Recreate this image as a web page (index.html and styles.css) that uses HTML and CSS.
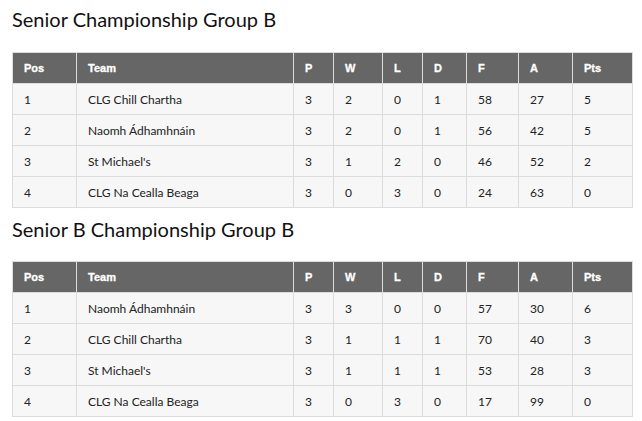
FILE: index.html
```html
<!DOCTYPE html>
<html>
<head>
<meta charset="utf-8">
<link rel="stylesheet" href="styles.css">
</head>
<body>
<section class="group">
  <h2 class="title">Senior Championship Group B</h2>
  <table class="standings">
    <thead>
      <tr><th class="c-pos">Pos</th><th class="c-team">Team</th><th class="c-p">P</th><th class="c-w">W</th><th class="c-l">L</th><th class="c-d">D</th><th class="c-f">F</th><th class="c-a">A</th><th class="c-pts">Pts</th></tr>
    </thead>
    <tbody>
      <tr><td>1</td><td>CLG Chill Chartha</td><td>3</td><td>2</td><td>0</td><td>1</td><td>58</td><td>27</td><td>5</td></tr>
      <tr><td>2</td><td>Naomh Ádhamhnáin</td><td>3</td><td>2</td><td>0</td><td>1</td><td>56</td><td>42</td><td>5</td></tr>
      <tr><td>3</td><td>St Michael's</td><td>3</td><td>1</td><td>2</td><td>0</td><td>46</td><td>52</td><td>2</td></tr>
      <tr><td>4</td><td>CLG Na Cealla Beaga</td><td>3</td><td>0</td><td>3</td><td>0</td><td>24</td><td>63</td><td>0</td></tr>
    </tbody>
  </table>
</section>
<section class="group">
  <h2 class="title">Senior B Championship Group B</h2>
  <table class="standings">
    <thead>
      <tr><th class="c-pos">Pos</th><th class="c-team">Team</th><th class="c-p">P</th><th class="c-w">W</th><th class="c-l">L</th><th class="c-d">D</th><th class="c-f">F</th><th class="c-a">A</th><th class="c-pts">Pts</th></tr>
    </thead>
    <tbody>
      <tr><td>1</td><td>Naomh Ádhamhnáin</td><td>3</td><td>3</td><td>0</td><td>0</td><td>57</td><td>30</td><td>6</td></tr>
      <tr><td>2</td><td>CLG Chill Chartha</td><td>3</td><td>1</td><td>1</td><td>1</td><td>70</td><td>40</td><td>3</td></tr>
      <tr><td>3</td><td>St Michael's</td><td>3</td><td>1</td><td>1</td><td>1</td><td>53</td><td>28</td><td>3</td></tr>
      <tr><td>4</td><td>CLG Na Cealla Beaga</td><td>3</td><td>0</td><td>3</td><td>0</td><td>17</td><td>99</td><td>0</td></tr>
    </tbody>
  </table>
</section>
</body>
</html>
```
FILE: styles.css
```css
html, body {
  margin: 0;
  padding: 0;
  background: #ffffff;
}
body {
  padding: 0 9px 0 12px;
  font-family: "Lato", "Liberation Sans", sans-serif;
  color: #222;
}
.title {
  margin: 0;
  padding-top: 6px;
  height: 52px;
  box-sizing: border-box;
  font-family: "Lato", sans-serif;
  font-weight: 400;
  font-size: 20px;
  line-height: 26px;
  color: #111;
}
.group + .group .title {
  padding-top: 8px;
  height: 53px;
}
.standings {
  width: 621px;
  border-collapse: collapse;
  table-layout: fixed;
  font-size: 12px;
}
.standings th,
.standings td {
  box-sizing: border-box;
  text-align: left;
  padding: 0 0 0 11px;
  border: 1px solid #dcdcdc;
}
.standings th {
  height: 31px;
  background: #666666;
  color: #ffffff;
  font-family: "Liberation Sans", Arial, sans-serif;
  font-weight: 700;
  font-size: 11px;
  -webkit-text-stroke: 0.3px #ffffff;
  border-color: #dcdcdc;
}
.standings td {
  height: 31px;
  background: #f7f7f7;
  color: #222;
}
.c-pos { width: 64px; }
.c-team { width: 217px; }
.c-p { width: 40px; }
.c-w { width: 49px; }
.c-l { width: 40px; }
.c-d { width: 44px; }
.c-f { width: 52px; }
.c-a { width: 54px; }
.c-pts { width: 60px; }
```
